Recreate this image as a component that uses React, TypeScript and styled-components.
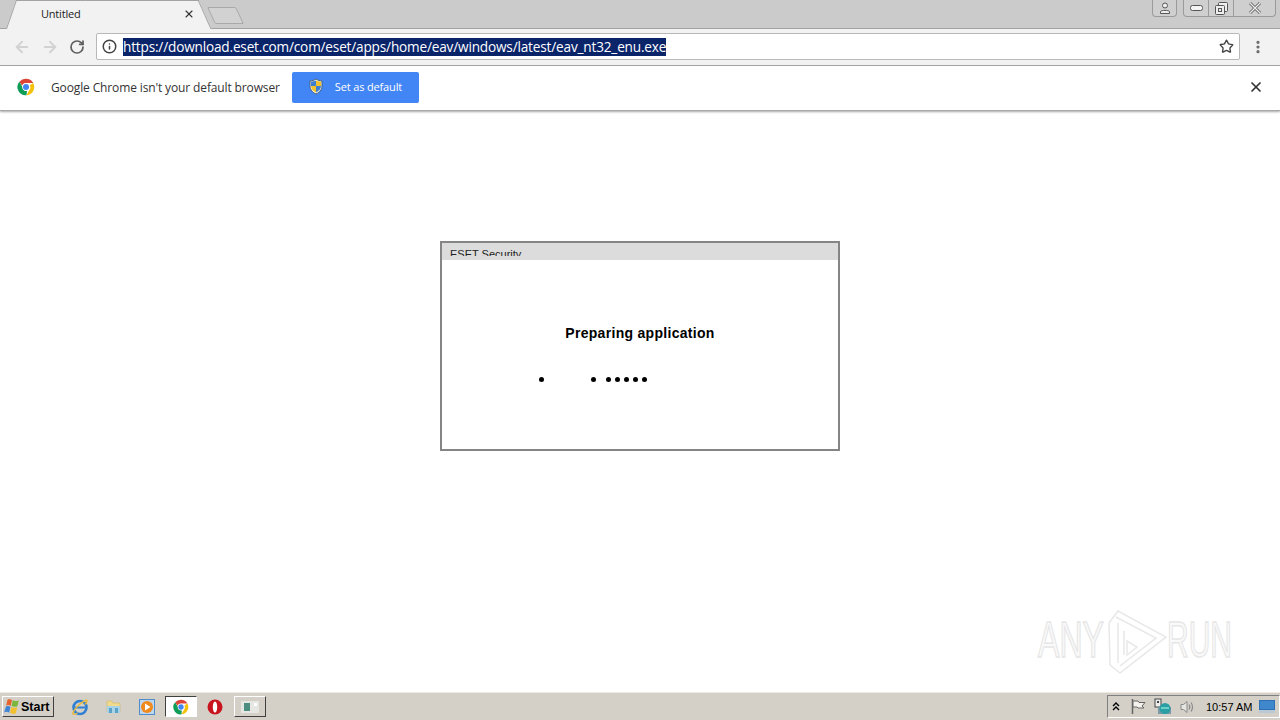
import styled, { createGlobalStyle } from 'styled-components'
import { ArrowLeft, ArrowRight, Info, MoreVertical, RotateCw, Star, X } from 'lucide-react'

const GlobalStyle = createGlobalStyle`
  html, body {
    margin: 0;
    padding: 0;
    width: 1280px;
    height: 720px;
    overflow: hidden;
    background: #fff;
  }
`

const Screen = styled.div`
  position: relative;
  width: 1280px;
  height: 720px;
  display: flex;
  flex-direction: column;
  font-family: 'Open Sans', 'Noto Sans', sans-serif;
  color: #222;
`

const TabStrip = styled.div`
  height: 28px;
  flex: none;
  background: #cbcbcb;
  border-bottom: 1px solid #a3a3a3;
  display: flex;
  align-items: flex-start;
  padding-left: 14px;
`

const Tab = styled.div`
  position: relative;
  width: 188px;
  height: 29px;
  flex: none;
  display: flex;
  align-items: center;
  justify-content: space-between;
  padding: 0 7px 2px 27px;
  box-sizing: border-box;
  font-size: 11px;
  letter-spacing: -0.2px;
  color: #222;
  z-index: 1;

  &::before,
  &::after {
    content: '';
    position: absolute;
    top: 0;
    bottom: 0;
    width: 60%;
    background: #f2f2f2;
    border-top: 1px solid #a3a3a3;
    box-sizing: border-box;
    z-index: -1;
  }
  &::before {
    left: -3px;
    border-left: 1px solid #a3a3a3;
    transform: skewX(-19deg);
  }
  &::after {
    right: -3px;
    border-right: 1px solid #a3a3a3;
    transform: skewX(24deg);
  }
`

const NewTab = styled.div`
  width: 27px;
  height: 15px;
  margin: 7px 0 0 9px;
  background: #d2d2d2;
  border: 1px solid #a9a9a9;
  border-radius: 2px;
  transform: skewX(25deg);
`

const WindowControls = styled.div`
  margin-left: auto;
  display: flex;
  gap: 6px;
  padding-right: 4px;
  align-items: flex-start;
`

const WindowGroup = styled.div`
  display: flex;
  height: 16px;
  background: #cfcfcf;
  border: 1px solid #9b9b9b;
  border-top: none;
  border-radius: 0 0 4px 4px;
`

const WindowButton = styled.div<{ $w: number; $divider?: boolean }>`
  width: ${p => p.$w}px;
  display: flex;
  align-items: center;
  justify-content: center;
  border-left: ${p => (p.$divider ? '1px solid #9b9b9b' : 'none')};
`

const Toolbar = styled.div`
  height: 37px;
  flex: none;
  background: #f2f2f2;
  border-bottom: 1px solid #a8a8a8;
  box-sizing: border-box;
  display: flex;
  align-items: center;
  padding: 0 13px 1px 13px;
`

const NavButton = styled.div<{ $mr: number }>`
  display: flex;
  margin-right: ${p => p.$mr}px;
`

const Omnibox = styled.div`
  width: 1144px;
  height: 27px;
  box-sizing: border-box;
  background: #fff;
  border: 1px solid #b8b8b8;
  border-radius: 2px;
  display: flex;
  align-items: center;
  padding: 0 5px 0 5px;
`

const Url = styled.span`
  margin-left: 6px;
  background: #0a246a;
  color: #fff;
  font-size: 13.6px;
  line-height: 18px;
  height: 18px;
  letter-spacing: -0.17px;
  white-space: nowrap;
`

const OmniStar = styled.div`
  margin-left: auto;
  display: flex;
`

const MenuDots = styled.div`
  margin-left: 10px;
  display: flex;
`

const InfoBar = styled.div`
  height: 45px;
  flex: none;
  background: #fff;
  display: flex;
  align-items: center;
  padding: 0 16px 2px 17px;
  box-shadow: 0 1px 2px rgba(0, 0, 0, 0.35);
  border-bottom: 1px solid #a8a8a8;
  box-sizing: border-box;
  z-index: 1;
`

const InfoText = styled.span`
  margin-left: 16px;
  font-size: 12px;
  letter-spacing: -0.13px;
  color: #333;
`

const DefaultButton = styled.div`
  margin-left: 12px;
  width: 127px;
  height: 31px;
  background: #4285f4;
  border-radius: 2px;
  display: flex;
  align-items: center;
  padding: 0 0 1px 16px;
  box-sizing: border-box;
  color: #fff;
  font-size: 11px;
  letter-spacing: -0.15px;
  gap: 11px;
`

const InfoClose = styled.div`
  margin-left: auto;
  display: flex;
`

const Content = styled.main`
  flex: 1;
  background: #fff;
  padding-top: 130px;
`

const Dialog = styled.div`
  width: 400px;
  height: 210px;
  margin: 0 auto;
  border: 2px solid #858585;
  box-sizing: border-box;
  background: #fff;
`

const DialogTitle = styled.div`
  height: 17px;
  background: #dcdcdc;
  padding: 4px 0 0 8px;
  box-sizing: border-box;
`

const DialogTitleText = styled.div`
  height: 9px;
  overflow: hidden;
  font-family: 'Liberation Sans', sans-serif;
  font-size: 11px;
  line-height: 14px;
  color: #222;
`

const Preparing = styled.div`
  margin-top: 65px;
  text-align: center;
  font-family: 'Liberation Sans', sans-serif;
  font-weight: 700;
  font-size: 14px;
  letter-spacing: 0.3px;
  line-height: 16px;
  color: #000;
`

const Dots = styled.div`
  display: flex;
  margin-top: 36px;
  padding-left: 97px;
`

const Dot = styled.i<{ $ml: number }>`
  width: 5px;
  height: 5px;
  border-radius: 50%;
  background: #000;
  margin-left: ${p => p.$ml}px;
`

const Taskbar = styled.footer`
  height: 28px;
  flex: none;
  background: #d4d0c8;
  border-top: 1px solid #efebe3;
  box-sizing: border-box;
  display: flex;
  align-items: center;
  padding: 0 0 0 2px;
`

const StartButton = styled.div`
  width: 52px;
  height: 21px;
  box-sizing: border-box;
  display: flex;
  align-items: center;
  background: #d4d0c8;
  border: 1px solid;
  border-color: #fff #404040 #404040 #fff;
  font-family: 'Liberation Sans', sans-serif;
  font-weight: 700;
  font-size: 12.5px;
  color: #000;
`

const QuickIcon = styled.div<{ $ml: number }>`
  margin-left: ${p => p.$ml}px;
  display: flex;
`

const TaskButton = styled.div<{ $active?: boolean; $ml: number; $w: number }>`
  margin-left: ${p => p.$ml}px;
  width: ${p => p.$w}px;
  height: 21px;
  box-sizing: border-box;
  display: flex;
  align-items: center;
  justify-content: center;
  background: ${p => (p.$active ? '#fff' : '#d4d0c8')};
  border: 1px solid;
  border-color: ${p => (p.$active ? '#404040 #fff #fff #404040' : '#fff #404040 #404040 #fff')};
`

const Tray = styled.div`
  margin-left: auto;
  height: 23px;
  width: 173px;
  box-sizing: border-box;
  border: 1px solid;
  border-color: #808080 #fff #fff #808080;
  display: flex;
  align-items: center;
  padding-left: 4px;
`

const TrayIcon = styled.div<{ $ml: number }>`
  margin-left: ${p => p.$ml}px;
  display: flex;
`

const Clock = styled.span`
  margin-left: 10px;
  font-family: 'Liberation Sans', sans-serif;
  font-size: 11px;
  color: #000;
  white-space: nowrap;
`

const Watermark = styled.svg`
  position: absolute;
  left: 1030px;
  top: 605px;
`

const ChromeLogo = ({ size }: { size: number }) => (
  <svg width={size} height={size} viewBox="0 0 24 24">
    <path d="M12 1a11 11 0 0 1 9.600 5.600H12a5.500 5.500 0 0 0-5.200 3.700L3.200 4.900A11 11 0 0 1 12 1z" fill="#db4437" />
    <path d="M21.600 6.600A11 11 0 0 1 12.600 23l4.200-7.300a5.500 5.500 0 0 0 .1-6z" fill="#f4c20d" />
    <path d="M12.600 23A11 11 0 0 1 3.200 4.900l4.600 8a5.500 5.500 0 0 0 5.600 4.500z" fill="#0f9d58" />
    <circle cx="12" cy="12" r="5" fill="#fff" />
    <circle cx="12" cy="12" r="4" fill="#4285f4" />
  </svg>
)

const ShieldIcon = () => (
  <svg width="16" height="17" viewBox="0 0 16 17">
    <path d="M8 1c2 1.300 4 2 6 2v5c0 4-2.800 6.500-6 8-3.200-1.500-6-4-6-8V3c2 0 4-.7 6-2z" fill="#f6f3e4" stroke="#44607e" />
    <path d="M8 2.500V8H3V3.700c1.800 0 3.500-.5 5-1.200z" fill="#3f7fd0" />
    <path d="M8 8h5c0 3-2.200 5.200-5 6.500z" fill="#3f7fd0" />
    <path d="M8 2.500c1.500.7 3.200 1.200 5 1.200V8H8z" fill="#f2c22e" />
    <path d="M8 8v6.500C5.200 13.200 3 11 3 8z" fill="#f2c22e" />
  </svg>
)

const WindowsFlag = () => (
  <svg width="18" height="18" viewBox="0 0 16 16">
    <path d="M4 1.500c2-.8 3-.4 4 .2L6.800 7C5.600 6.300 4.200 6 2.800 6.800z" fill="#e8622c" />
    <path d="M8.600 2c1.500.8 3 1 5.400.2L12.800 7.400c-1.700.7-3.700.6-5.200-.2z" fill="#7db63e" />
    <path d="M2.600 7.600c1.400-.8 2.800-.5 4 .2L5.500 13c-1.300-.8-3-1-4.500-.2z" fill="#3f84d4" />
    <path d="M7.400 8c1.500.8 3.500.9 5.200.2L11.500 13.500c-1.600.7-3.700.6-5.200-.2z" fill="#f2c02e" />
  </svg>
)

const IeIcon = () => (
  <svg width="18" height="18" viewBox="0 0 18 18">
    <ellipse cx="9" cy="9.500" rx="6.500" ry="6.500" fill="none" stroke="#2f7fd3" strokeWidth="2.600" />
    <path d="M4 9.500h10" stroke="#2f7fd3" strokeWidth="2" />
    <path d="M1.500 15.500C3 11 10 4 15.500 2c1.500 1-.5 3.500-1.500 4.500" fill="none" stroke="#e8b93a" strokeWidth="1.400" />
    <path d="M1.500 15.500c1 1.500 3.500.5 5-.5" fill="none" stroke="#e8b93a" strokeWidth="1.400" />
  </svg>
)

const FolderIcon = () => (
  <svg width="17" height="17" viewBox="0 0 17 17">
    <path d="M2 3h5l1 2h7v9H2z" fill="#f1da8e" stroke="#d0b564" strokeWidth=".6" />
    <path d="M2 8h13v7H2z" fill="#a8d2e6" />
    <path d="M4 15V10h3v5M10 15V10h3v5" fill="#5aa2c7" />
  </svg>
)

const MediaIcon = () => (
  <svg width="16" height="16" viewBox="0 0 16 16">
    <rect x=".5" y=".5" width="15" height="15" fill="#bcd7ef" stroke="#4f8cc9" />
    <circle cx="8" cy="8" r="6" fill="#f08a1c" />
    <path d="M6 4.500l5.500 3.500L6 11.500z" fill="#fff" />
  </svg>
)

const OperaIcon = () => (
  <svg width="16" height="16" viewBox="0 0 16 16">
    <circle cx="8" cy="8" r="7.500" fill="#c8141e" />
    <ellipse cx="8" cy="8" rx="2.200" ry="5.500" fill="#fff" />
  </svg>
)

const ExplorerThumb = () => (
  <svg width="18" height="12" viewBox="0 0 18 12">
    <rect width="18" height="12" fill="#e6e6e2" />
    <rect x="3" y="2" width="6" height="8" fill="#4c8f80" />
    <rect x="13" y="2" width="3" height="3" fill="#fff" />
  </svg>
)

const FlagIcon = () => (
  <svg width="17" height="17" viewBox="0 0 17 17" fill="none" stroke="#666">
    <path d="M2.500 1v15" strokeWidth="1.500" />
    <path d="M3 3h5l1 1.500h6L12 8l2 2H8L7 9H3z" fill="#f4f2ec" />
  </svg>
)

const NetworkIcon = () => (
  <svg width="18" height="18" viewBox="0 0 18 18">
    <rect x="1" y="1" width="6" height="8" fill="#eee" stroke="#444" />
    <rect x="3" y="3" width="2" height="2" fill="#444" />
    <rect x="4" y="9" width="13" height="7" fill="#7d9aa8" />
    <circle cx="11" cy="10.500" r="5.500" fill="#2c9fa4" />
    <path d="M7 9h8v2H7z" fill="#6bd0c8" />
  </svg>
)

const VolumeIcon = () => (
  <svg width="17" height="16" viewBox="0 0 17 16" fill="none" stroke="#8a8a8a">
    <path d="M2 5.500h2.500L8 2.500v11l-3.500-3H2z" fill="#e4e4e0" />
    <path d="M10 5.500c1 1.500 1 3.500 0 5M12 3.500c2 2.500 2 6.500 0 9" strokeWidth="1.200" />
  </svg>
)

const DesktopIcon = () => (
  <svg width="16" height="13" viewBox="0 0 16 13">
    <rect width="16" height="13" fill="#2e6fb4" />
    <rect x="1" y="1" width="14" height="8" fill="#3f88cc" />
    <rect x="0" y="10" width="16" height="3" fill="#b9c9d6" />
  </svg>
)

const App = () => (
  <Screen>
    <GlobalStyle />
    <TabStrip>
      <Tab>
        Untitled
        <X size={12} strokeWidth={2.2} color="#333" />
      </Tab>
      <NewTab />
      <WindowControls>
        <WindowGroup>
          <WindowButton $w={23}>
            <svg width="12" height="12" viewBox="0 0 12 12" fill="#eee" stroke="#555">
              <circle cx="6" cy="3.500" r="2.500" />
              <path d="M1.500 11.500V9.500c1-1.500 8-1.500 9 0v2z" />
            </svg>
          </WindowButton>
        </WindowGroup>
        <WindowGroup>
          <WindowButton $w={24}>
            <svg width="13" height="6" viewBox="0 0 13 6" fill="#f5f5f5" stroke="#555">
              <rect x=".5" y=".5" width="12" height="5" rx="2" />
            </svg>
          </WindowButton>
          <WindowButton $w={24} $divider>
            <svg width="13" height="13" viewBox="0 0 13 13" fill="#eee" stroke="#555">
              <rect x="3.500" y=".5" width="9" height="9" rx="1" />
              <rect x=".5" y="3.500" width="9" height="9" rx="1" />
              <rect x="3.500" y="6.500" width="3" height="3" />
            </svg>
          </WindowButton>
          <WindowButton $w={41} $divider>
            <svg width="14" height="12" viewBox="0 0 14 12" fill="none" stroke="#666">
              <path d="M2 1l10 10M12 1L2 11" strokeWidth="3" />
              <path d="M2 1l10 10M12 1L2 11" strokeWidth="1.200" stroke="#eee" />
            </svg>
          </WindowButton>
        </WindowGroup>
      </WindowControls>
    </TabStrip>
    <Toolbar>
      <NavButton $mr={10}>
        <ArrowLeft size={18} color="#d2d2d2" strokeWidth={2.6} />
      </NavButton>
      <NavButton $mr={10}>
        <ArrowRight size={18} color="#d2d2d2" strokeWidth={2.6} />
      </NavButton>
      <NavButton $mr={11}>
        <RotateCw size={16} color="#5f5f5f" strokeWidth={2.6} />
      </NavButton>
      <Omnibox>
        <Info size={15} color="#444" strokeWidth={2.4} />
        <Url>https://download.eset.com/com/eset/apps/home/eav/windows/latest/eav_nt32_enu.exe</Url>
        <OmniStar>
          <Star size={15} color="#444" strokeWidth={2.2} />
        </OmniStar>
      </Omnibox>
      <MenuDots>
        <MoreVertical size={16} color="#666" strokeWidth={2.8} />
      </MenuDots>
    </Toolbar>
    <InfoBar>
      <ChromeLogo size={18} />
      <InfoText>Google Chrome isn't your default browser</InfoText>
      <DefaultButton>
        <ShieldIcon />
        Set as default
      </DefaultButton>
      <InfoClose>
        <X size={16} strokeWidth={2.6} color="#333" />
      </InfoClose>
    </InfoBar>
    <Content>
      <Dialog>
        <DialogTitle>
          <DialogTitleText>ESET Security</DialogTitleText>
        </DialogTitle>
        <Preparing>Preparing application</Preparing>
        <Dots>
          {[0, 47, 10, 4, 4, 4, 4].map((ml, i) => (
            <Dot key={i} $ml={ml} />
          ))}
        </Dots>
      </Dialog>
    </Content>
    <Taskbar>
      <StartButton>
        <WindowsFlag />
        Start
      </StartButton>
      <QuickIcon $ml={17}>
        <IeIcon />
      </QuickIcon>
      <QuickIcon $ml={16}>
        <FolderIcon />
      </QuickIcon>
      <QuickIcon $ml={17}>
        <MediaIcon />
      </QuickIcon>
      <TaskButton $active $ml={10} $w={32}>
        <ChromeLogo size={16} />
      </TaskButton>
      <QuickIcon $ml={10}>
        <OperaIcon />
      </QuickIcon>
      <TaskButton $ml={11} $w={32}>
        <ExplorerThumb />
      </TaskButton>
      <Tray>
        <TrayIcon $ml={0}>
          <svg width="8" height="9" viewBox="0 0 8 9" fill="none" stroke="#000" strokeWidth="1.400">
            <path d="M1 4l3-3 3 3M1 8l3-3 3 3" />
          </svg>
        </TrayIcon>
        <TrayIcon $ml={10}>
          <FlagIcon />
        </TrayIcon>
        <TrayIcon $ml={7}>
          <NetworkIcon />
        </TrayIcon>
        <TrayIcon $ml={7}>
          <VolumeIcon />
        </TrayIcon>
        <Clock>10:57 AM</Clock>
        <TrayIcon $ml={7}>
          <DesktopIcon />
        </TrayIcon>
      </Tray>
    </Taskbar>
    <Watermark width="250" height="75" viewBox="0 0 250 75">
      <g
        fill="#fafafa"
        stroke="#e6e6e6"
        strokeWidth="1.500"
        fontFamily="Liberation Sans, sans-serif"
        fontSize="50"
      >
        <text x="8" y="52" textLength="66" lengthAdjust="spacingAndGlyphs">ANY</text>
        <text x="137" y="52" textLength="65" lengthAdjust="spacingAndGlyphs">RUN</text>
      </g>
      <g fill="none" stroke="#e8e8e8" strokeWidth="1.500">
        <path d="M79 18L88 6l48 26-46 36-10-8z" />
        <path d="M86 12l40 21-36 28" />
        <path d="M97 36l10 6-10 8z" />
        <path d="M88 18v40M94 26v24" />
      </g>
    </Watermark>
  </Screen>
)

export default App
